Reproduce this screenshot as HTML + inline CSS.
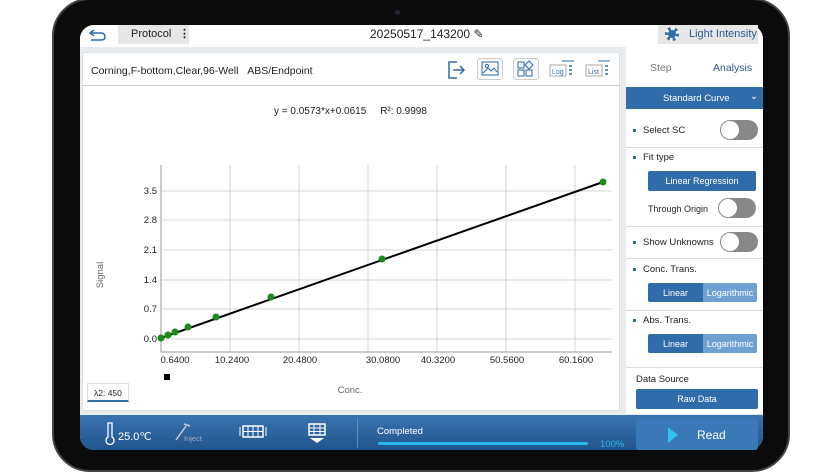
<!DOCTYPE html>
<html><head><meta charset="utf-8"><style>
*{box-sizing:border-box;margin:0;padding:0}
body{width:840px;height:475px;background:#fff;position:relative;overflow:hidden;font-family:"Liberation Sans",sans-serif;font-size:10px;color:#222}
.abs{position:absolute}
.tab{left:52px;top:-2px;width:738px;height:474px;background:#0b0b0b;border-radius:38px;border:2px solid #444}
.screen{left:80px;top:25px;width:683px;height:425px;background:#e9ecef;border-radius:14px;overflow:hidden}
.btn{background:#2f6ca9;color:#fff;text-align:center;border-radius:2px;font-size:9px}
.sep{height:1px;background:#ddd;left:626px;width:137px}
.dot{width:3px;height:3px;background:#2f6ca9}
.tog{width:38px;height:20px;border-radius:10px;background:#888}
.tog:before{content:"";position:absolute;left:1px;top:1px;width:18px;height:18px;border-radius:50%;background:#fff}
.lab{font-size:9.5px;color:#222}
.ib{border:1px solid #ccc;border-radius:3px;background:#f7f9fb;width:26px;height:22px}
</style></head><body>
<div class="abs tab"></div>
<div class="abs" style="left:395px;top:10px;width:5px;height:5px;border-radius:50%;background:#223"></div>
<div class="abs screen"></div>
<!-- header -->
<div class="abs" style="left:80px;top:25px;width:683px;height:22px;background:#fff;border-radius:14px 14px 0 0"></div>
<svg class="abs" style="left:88px;top:27px" width="20" height="16"><path d="M6 3 L2 6 L6 9 M2 6 H13 Q17 6 17 10 Q17 13 13 13 H3" fill="none" stroke="#2f6ca9" stroke-width="1.5"/></svg>
<div class="abs" style="left:118px;top:25px;width:71px;height:19px;background:#e6e6e6"></div>
<div class="abs" style="left:131px;top:28px;font-size:11px">Protocol</div>
<div class="abs" style="left:179px;top:27px;font-size:11px;font-weight:bold">⋮</div>
<div class="abs" style="left:370px;top:27px;font-size:12px">20250517_143200 ✎</div>
<div class="abs" style="left:658px;top:25px;width:100px;height:19px;background:#e6e6e6"></div>
<div class="abs" style="left:665px;top:27px;width:14px;height:14px;border-radius:50%;background:#2f6ca9;border:3px dotted #fff"></div>
<div class="abs" style="left:689px;top:28px;font-size:11px;color:#2a5a90">Light Intensity</div>
<!-- chart card -->
<div class="abs" style="left:82px;top:52px;width:538px;height:359px;background:#fff;border:1px solid #ddd;border-radius:3px"></div>
<div class="abs" style="left:82px;top:85px;width:538px;height:1px;background:#ccc"></div>
<div class="abs" style="left:91px;top:65px;font-size:10.5px">Corning,F-bottom,Clear,96-Well&nbsp;&nbsp;&nbsp;ABS/Endpoint</div>
<svg class="abs" style="left:445px;top:58px" width="22" height="24"><path d="M12 4H4V20H12M8 12H19M15 8L19 12L15 16" fill="none" stroke="#2f6ca9" stroke-width="1.5"/></svg>
<div class="abs ib" style="left:477px;top:58px"><svg width="24" height="20"><rect x="4" y="3" width="16" height="13" fill="none" stroke="#2f6ca9"/><path d="M5 14L10 9L13 12L16 9L19 13" fill="none" stroke="#2f6ca9"/><circle cx="9" cy="7" r="1.5" fill="none" stroke="#2f6ca9"/></svg></div>
<div class="abs ib" style="left:513px;top:58px"><svg width="24" height="20"><rect x="4" y="3" width="6" height="6" fill="none" stroke="#2f6ca9"/><rect x="4" y="11" width="6" height="6" fill="none" stroke="#2f6ca9"/><rect x="12" y="11" width="6" height="6" fill="none" stroke="#2f6ca9"/><path d="M15 2L19 6L15 10L11 6Z" fill="none" stroke="#2f6ca9"/></svg></div>
<svg class="abs" style="left:548px;top:58px" width="28" height="24"><path d="M14 3H26" stroke="#2f6ca9"/><rect x="2" y="7" width="16" height="11" fill="#fff" stroke="#aaa"/><text x="4" y="16" font-size="7" fill="#2f6ca9" font-family="Liberation Sans">Log</text><path d="M21 8h3M21 12h3M21 16h3" stroke="#2f6ca9" stroke-width="1.5"/></svg>
<svg class="abs" style="left:584px;top:58px" width="28" height="24"><path d="M14 3H26" stroke="#2f6ca9"/><rect x="2" y="7" width="16" height="11" fill="#fff" stroke="#aaa"/><text x="4" y="16" font-size="7" fill="#2f6ca9" font-family="Liberation Sans">List</text><path d="M21 8h3M21 12h3M21 16h3" stroke="#2f6ca9" stroke-width="1.5"/></svg>
<div class="abs" style="left:274px;top:106px;font-size:10px">y = 0.0573*x+0.0615&nbsp;&nbsp;&nbsp;&nbsp;&nbsp;R²: 0.9998</div>
<svg class="abs" style="left:0;top:0" width="840" height="475" font-family="Liberation Sans" font-size="9.5" fill="#222">
<g stroke="#d6d6d6" stroke-width="1">
<path d="M230 165V352M299 165V352M368 165V352M437 165V352M506 165V352M575 165V352"/>
<path d="M161 191H612M161 220H612M161 250H612M161 280H612M161 309H612M161 339H612"/>
</g>
<path d="M161 165V352H612" stroke="#999" fill="none"/>
<g text-anchor="end"><text x="157" y="194">3.5</text><text x="157" y="223">2.8</text><text x="157" y="253">2.1</text><text x="157" y="283">1.4</text><text x="157" y="312">0.7</text><text x="157" y="342">0.0</text></g>
<g text-anchor="middle"><text x="175" y="363">0.6400</text><text x="232" y="363">10.2400</text><text x="300" y="363">20.4800</text><text x="383" y="363">30.0800</text><text x="438" y="363">40.3200</text><text x="507" y="363">50.5600</text><text x="576" y="363">60.1600</text>
<text x="350" y="393" fill="#666">Conc.</text>
<text transform="translate(103 275) rotate(-90)" fill="#666">Signal</text></g>
<rect x="164" y="374" width="6" height="6" fill="#000"/>
<path d="M161 338L603 182" stroke="#000" stroke-width="2"/>
<g fill="#1a8a1a"><circle cx="161" cy="338" r="3.5"/><circle cx="168" cy="335" r="3.5"/><circle cx="175" cy="332" r="3.5"/><circle cx="188" cy="327" r="3.5"/><circle cx="216" cy="317" r="3.5"/><circle cx="271" cy="297" r="3.5"/><circle cx="382" cy="259" r="3.5"/><circle cx="603" cy="182" r="3.5"/></g>
</svg>
<div class="abs" style="left:87px;top:383px;width:42px;height:19px;border:1px solid #ddd;border-bottom:2px solid #2f6ca9;font-size:8.5px;padding:4px 0 0 6px">λ2: 450</div>
<!-- right panel -->
<div class="abs" style="left:626px;top:47px;width:137px;height:367px;background:#fff"></div>
<div class="abs" style="left:650px;top:62px;font-size:10.5px;color:#777">Step</div>
<div class="abs" style="left:713px;top:62px;font-size:10.5px;color:#2a5a90">Analysis</div>
<div class="abs" style="left:626px;top:87px;width:137px;height:22px;background:#2f6ca9;color:#fff;font-size:9.5px;padding:6px 0 0 37px">Standard Curve<span style="position:absolute;left:124px;top:4px">⌄</span></div>
<div class="abs dot" style="left:633px;top:129px"></div><div class="abs lab" style="left:643px;top:125px">Select SC</div><div class="abs tog" style="left:720px;top:120px"></div>
<div class="abs sep" style="top:147px"></div>
<div class="abs dot" style="left:633px;top:156px"></div><div class="abs lab" style="left:643px;top:152px">Fit type</div>
<div class="abs btn" style="left:648px;top:171px;width:108px;height:20px;padding-top:5px">Linear Regression</div>
<div class="abs lab" style="left:648px;top:204px;font-size:9px">Through Origin</div><div class="abs tog" style="left:718px;top:198px"></div>
<div class="abs sep" style="top:226px"></div>
<div class="abs dot" style="left:633px;top:241px"></div><div class="abs lab" style="left:643px;top:237px">Show Unknowns</div><div class="abs tog" style="left:720px;top:232px"></div>
<div class="abs sep" style="top:258px"></div>
<div class="abs dot" style="left:633px;top:268px"></div><div class="abs lab" style="left:643px;top:264px">Conc. Trans.</div>
<div class="abs btn" style="left:648px;top:283px;width:55px;height:19px;padding-top:5px;border-radius:2px 0 0 2px">Linear</div>
<div class="abs btn" style="left:703px;top:283px;width:54px;height:19px;padding-top:5px;background:#6fa0d2;border-radius:0 2px 2px 0">Logarithmic</div>
<div class="abs sep" style="top:310px"></div>
<div class="abs dot" style="left:633px;top:319px"></div><div class="abs lab" style="left:643px;top:315px">Abs. Trans.</div>
<div class="abs btn" style="left:648px;top:334px;width:55px;height:19px;padding-top:5px;border-radius:2px 0 0 2px">Linear</div>
<div class="abs btn" style="left:703px;top:334px;width:54px;height:19px;padding-top:5px;background:#6fa0d2;border-radius:0 2px 2px 0">Logarithmic</div>
<div class="abs sep" style="top:367px"></div>
<div class="abs lab" style="left:636px;top:374px">Data Source</div>
<div class="abs btn" style="left:636px;top:389px;width:122px;height:20px;padding-top:5px">Raw Data</div>
<!-- bottom bar -->
<div class="abs" style="left:80px;top:415px;width:683px;height:35px;background:linear-gradient(#3a74b0,#21558e);border-radius:0 0 14px 14px"></div>
<svg class="abs" style="left:104px;top:421px" width="12" height="24"><path d="M4 2V16A4 4 0 1 0 8 16V2Z" fill="none" stroke="#fff" stroke-width="1.3"/></svg>
<div class="abs" style="left:118px;top:430px;color:#fff;font-size:11px">25.0℃</div>
<svg class="abs" style="left:172px;top:420px" width="22" height="24"><path d="M4 20L14 6M12 4L18 6" stroke="#ccd" stroke-width="1.5"/></svg>
<div class="abs" style="left:184px;top:434px;color:#aab;font-size:7.5px">Inject</div>
<svg class="abs" style="left:238px;top:424px" width="30" height="16"><rect x="5" y="2" width="20" height="11" fill="none" stroke="#fff" stroke-width="1.5"/><path d="M5 7.5H25M10 2V13M15 2V13M20 2V13M2 3V12M28 3V12" stroke="#fff"/></svg>
<svg class="abs" style="left:306px;top:422px" width="22" height="22"><rect x="3" y="2" width="16" height="11" fill="none" stroke="#fff" stroke-width="1.5"/><path d="M3 6H19M3 9.5H19M8 2V13M14 2V13" stroke="#fff"/><path d="M4 16H18L11 21Z" fill="#fff"/></svg>
<div class="abs" style="left:357px;top:418px;width:1px;height:30px;background:#5d8ec2"></div>
<div class="abs" style="left:377px;top:426px;color:#fff;font-size:9.5px">Completed</div>
<div class="abs" style="left:378px;top:442px;width:210px;height:3px;background:#2ab8ea;border-radius:2px"></div>
<div class="abs" style="left:600px;top:439px;color:#2ab8ea;font-size:9.5px">100%</div>
<div class="abs" style="left:636px;top:419px;width:122px;height:31px;background:#3a78b8;border-radius:3px"></div>
<svg class="abs" style="left:666px;top:426px" width="14" height="18"><path d="M2 1L12 9L2 17Z" fill="#2fc4ee"/></svg>
<div class="abs" style="left:697px;top:428px;color:#fff;font-size:12px">Read</div>
</body></html>
